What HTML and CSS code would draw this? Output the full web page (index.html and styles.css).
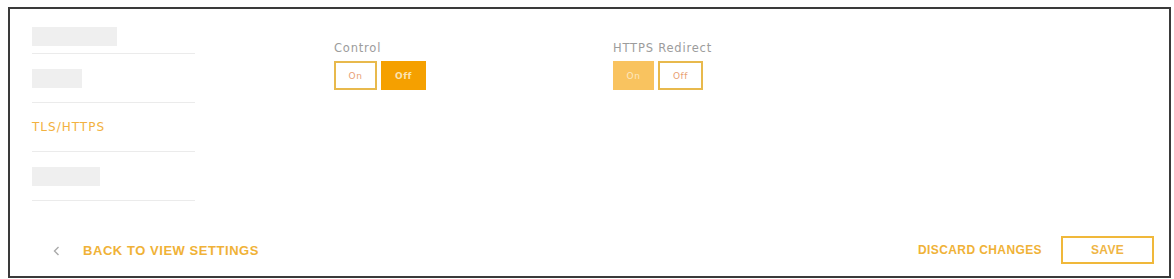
FILE: index.html
```html
<!DOCTYPE html>
<html>
<head>
<meta charset="utf-8">
<link rel="stylesheet" href="styles.css">
</head>
<body>
<div class="frame">
  <div class="top">
    <nav class="sidebar">
      <div class="item item-first"><span class="ph ph-a"></span></div>
      <div class="item"><span class="ph ph-b"></span></div>
      <div class="item"><span class="nav-link">TLS/HTTPS</span></div>
      <div class="item"><span class="ph ph-c"></span></div>
    </nav>
    <div class="main">
      <div class="group">
        <div class="label">Control</div>
        <div class="toggle">
          <span class="btn btn-outline">On</span>
          <span class="btn btn-on">Off</span>
        </div>
      </div>
      <div class="group">
        <div class="label">HTTPS Redirect</div>
        <div class="toggle">
          <span class="btn btn-light">On</span>
          <span class="btn btn-outline btn-wide">Off</span>
        </div>
      </div>
    </div>
  </div>
  <div class="footer">
    <a class="back">
      <svg class="chev" width="7" height="10" viewBox="0 0 7 10"><polyline points="5.5,1 1.5,5 5.5,9" fill="none" stroke="#aaaaaa" stroke-width="1.4"/></svg>
      <span class="back-text">BACK TO VIEW SETTINGS</span>
    </a>
    <div class="actions">
      <span class="discard">DISCARD CHANGES</span>
      <span class="save">SAVE</span>
    </div>
  </div>
</div>
</body>
</html>
```

FILE: styles.css
```css
html, body {
  margin: 0;
  padding: 0;
  background: #ffffff;
}
.frame {
  margin: 7px 0 0 8px;
  width: 1163px;
  height: 271px;
  box-sizing: border-box;
  border: 2px solid #3a3a3a;
  display: flex;
  flex-direction: column;
  font-family: "DejaVu Sans", "Liberation Sans", sans-serif;
}
.top {
  display: flex;
  padding: 10px 0 0 22px;
}
.sidebar {
  width: 163px;
  display: flex;
  flex-direction: column;
}
.item {
  height: 48px;
  border-bottom: 1px solid #ebebeb;
  display: flex;
  align-items: center;
}
.item-first {
  height: 34px;
}
.ph {
  display: block;
  height: 19px;
  background: #efefef;
}
.ph-a { width: 85px; }
.ph-b { width: 50px; }
.ph-c { width: 68px; }
.nav-link {
  font-size: 12px;
  letter-spacing: 1px;
  color: #f2b140;
}
.main {
  display: flex;
  margin-left: 139px;
  padding-top: 23px;
}
.group {
  width: 279px;
}
.label {
  font-size: 11.5px;
  line-height: 13px;
  letter-spacing: 0.8px;
  color: #9c9c9c;
}
.toggle {
  display: flex;
  gap: 4px;
  margin-top: 6px;
}
.btn {
  width: 43px;
  height: 29px;
  box-sizing: border-box;
  display: flex;
  align-items: center;
  justify-content: center;
  font-size: 9px;
  letter-spacing: 0.5px;
}
.btn-wide { width: 45px; }
.btn-outline {
  border: 2px solid #e8b94c;
  color: #e9a073;
  background: #fff;
}
.btn-on {
  width: 45px;
  background: #f5a000;
  color: #fbe3b0;
  font-weight: bold;
}
.btn-light {
  width: 41px;
  background: #f9c35f;
  color: #fde8c0;
}
.footer {
  margin-top: auto;
  display: flex;
  align-items: center;
  justify-content: space-between;
  padding: 0 15px 12px 43px;
  font-family: "Liberation Sans", Arial, sans-serif;
  font-weight: bold;
  font-size: 12px;
}
.back {
  display: flex;
  align-items: center;
  gap: 23px;
}
.chev {
  display: block;
  margin-top: 1px;
}
.back-text {
  color: #f0b237;
  font-size: 13px;
  letter-spacing: 0.55px;
}
.actions {
  display: flex;
  align-items: center;
  gap: 19px;
}
.discard {
  color: #f0b237;
  letter-spacing: 0.4px;
}
.save {
  width: 93px;
  height: 28px;
  box-sizing: border-box;
  border: 2px solid #f0b83a;
  color: #efb545;
  display: flex;
  align-items: center;
  justify-content: center;
  letter-spacing: 0.3px;
}
```
